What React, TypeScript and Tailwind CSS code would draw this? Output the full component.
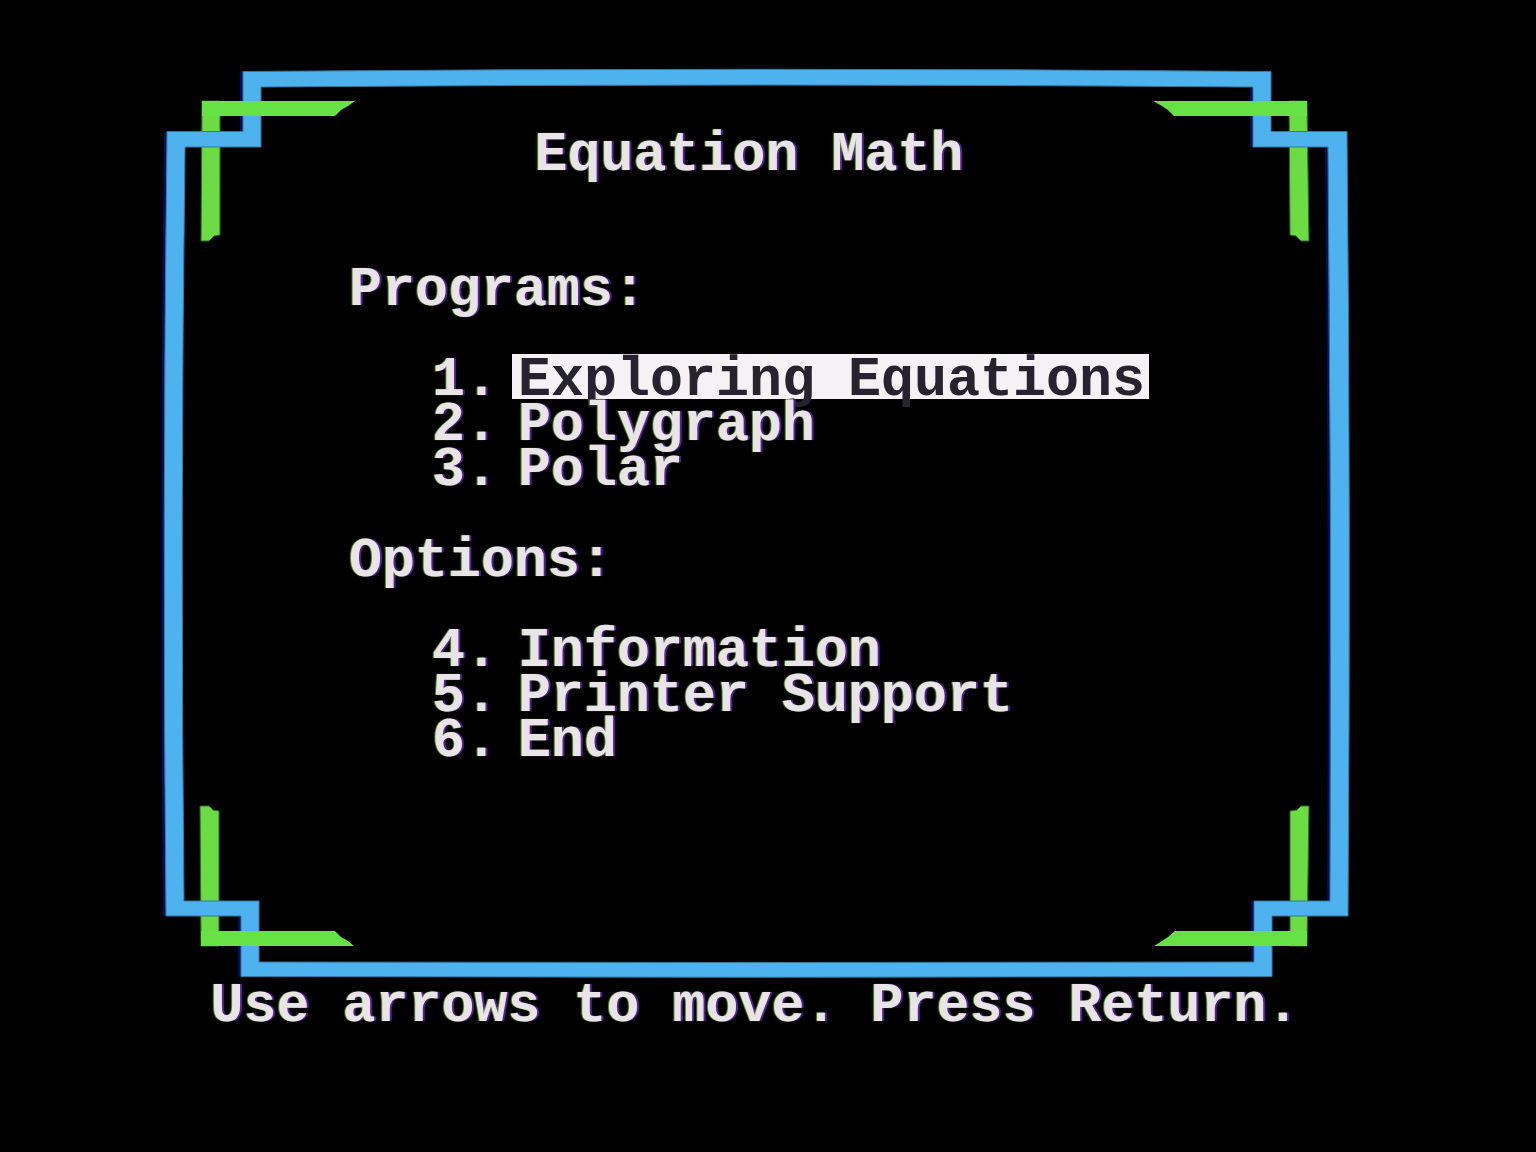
import { useEffect, useState } from "react";

type Item = { key: number; label: string };

const programs: Item[] = [
  { key: 1, label: "Exploring Equations" },
  { key: 2, label: "Polygraph" },
  { key: 3, label: "Polar" },
];

const options: Item[] = [
  { key: 4, label: "Information" },
  { key: 5, label: "Printer Support" },
  { key: 6, label: "End" },
];

// Outer edge of the blue frame followed by its inner edge; the long sides bow slightly.
const FRAME =
  "M243 71.5 Q757 67 1271 71.5 V131.5 H1347 Q1351 524 1348 916 H1272 V976.5 Q757 978 241 976.5 V916 H166 Q162 524 167 131.5 H243 Z " +
  "M261 87 V147 H185 Q180 524 184 901 H259 V962 Q757 963 1254 962 V901 H1330 Q1332 524 1328 147 H1253 V87 Q757 83 261 87 Z";

const GREEN_BARS = [
  "M202 101 H355 L348 106 L341 110 L335 116 H202 Z",
  "M1307 101 H1153 L1162 106 L1168 110 L1174 116 H1307 Z",
  "M201 946 H354 L348 941 L341 937 L335 931 H201 Z",
  "M1307 946 H1154 L1162 941 L1168 937 L1175 931 H1307 Z",
];

const GREEN_POSTS = [
  "M202 101 H220 V235 L214 236 L209 241 H201 Z",
  "M1289 101 H1307 L1309 241 H1301 L1296 236 L1290 235 Z",
  "M201 946 H219 V811 L213 810 L209 806 H200 Z",
  "M1290 946 H1307 L1309 806 H1301 L1297 810 L1290 811 Z",
];

function Frame() {
  return (
    <svg
      className="absolute inset-0 h-full w-full overflow-visible"
      viewBox="164 68 1186 910"
      preserveAspectRatio="none"
      aria-hidden="true"
    >
      <path d={FRAME} fill="#020b5c" fillRule="evenodd" transform="translate(-3 0)" />
      {GREEN_POSTS.map((d) => (
        <path key={d} d={d} fill="#6bdc43" stroke="#2f6a19" strokeWidth="1" />
      ))}
      <path d={FRAME} fill="#4eb2ee" fillRule="evenodd" stroke="#35789f" strokeWidth="1" />
      {GREEN_BARS.map((d) => (
        <path key={d} d={d} fill="#66e244" />
      ))}
    </svg>
  );
}

type MenuProps = {
  title: string;
  items: Item[];
  selected: number;
  onSelect: (key: number) => void;
};

function Menu({ title, items, selected, onSelect }: MenuProps) {
  return (
    <section>
      <h2 className="pt-2">{title}</h2>
      <ul className="mt-[45px] pl-[83px]">
        {items.map(({ key, label }) => (
          <li key={key} className="flex">
            <span className="w-[80px] pt-2">{key}.</span>
            <button
              type="button"
              aria-current={key === selected}
              onClick={() => onSelect(key)}
              className={
                key === selected
                  ? "bg-[#f4f2f4] pt-2 pr-1 pl-1.5 text-[#25232d] outline-none"
                  : "pt-2 pr-1 pl-1.5 outline-none [text-shadow:inherit]"
              }
            >
              {label}
            </button>
          </li>
        ))}
      </ul>
    </section>
  );
}

export default function App() {
  const [selected, setSelected] = useState(1);

  useEffect(() => {
    const onKey = (e: KeyboardEvent) => {
      if (e.key === "ArrowDown") setSelected((s) => (s % 6) + 1);
      if (e.key === "ArrowUp") setSelected((s) => ((s + 4) % 6) + 1);
    };
    window.addEventListener("keydown", onKey);
    return () => window.removeEventListener("keydown", onKey);
  }, []);

  return (
    <div className="min-h-screen bg-black pt-[68px] pr-[186px] pl-[164px] font-['Liberation_Mono',monospace] text-[55px] leading-[37px] font-bold whitespace-nowrap text-[#e8e4e8] [text-shadow:-1px_0_1px_#5c9a24,2px_0_1px_#5a249c]">
      <main className="relative pt-[61px] pb-[218px]">
        <Frame />
        <div className="relative">
          <h1 className="pt-2 pr-4 text-center">Equation Math</h1>
          <nav className="mt-[90px] flex flex-col gap-[46px] pl-[185px]" aria-label="Main menu">
            <Menu title="Programs:" items={programs} selected={selected} onSelect={setSelected} />
            <Menu title="Options:" items={options} selected={selected} onSelect={setSelected} />
          </nav>
        </div>
      </main>
      <footer className="pt-[10px] pr-1 text-center">Use arrows to move. Press Return.</footer>
    </div>
  );
}
